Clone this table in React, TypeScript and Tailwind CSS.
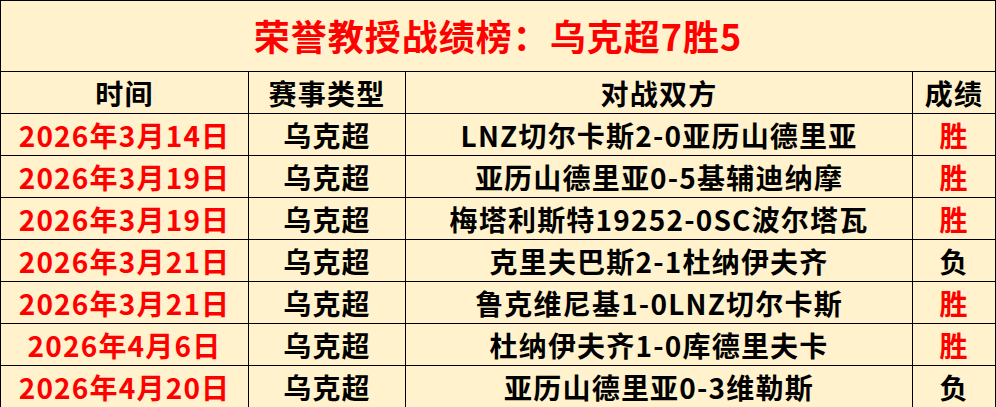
import { FC } from "react";

interface Match {
  date: string;
  league: string;
  teams: string;
  result: "胜" | "负";
}

const matches: Match[] = [
  { date: "2026年3月14日", league: "乌克超", teams: "LNZ切尔卡斯2-0亚历山德里亚", result: "胜" },
  { date: "2026年3月19日", league: "乌克超", teams: "亚历山德里亚0-5基辅迪纳摩", result: "胜" },
  { date: "2026年3月19日", league: "乌克超", teams: "梅塔利斯特19252-0SC波尔塔瓦", result: "胜" },
  { date: "2026年3月21日", league: "乌克超", teams: "克里夫巴斯2-1杜纳伊夫齐", result: "负" },
  { date: "2026年3月21日", league: "乌克超", teams: "鲁克维尼基1-0LNZ切尔卡斯", result: "胜" },
  { date: "2026年4月6日", league: "乌克超", teams: "杜纳伊夫齐1-0库德里夫卡", result: "胜" },
  { date: "2026年4月20日", league: "乌克超", teams: "亚历山德里亚0-3维勒斯", result: "负" },
];

const cell =
  "h-[42px] flex items-center justify-center border-r border-b border-black text-[28px] font-bold leading-none tracking-[1.2px] whitespace-nowrap";

const App: FC = () => {
  return (
    <div
      className="w-[996px] h-[407px] bg-[#fff2cc] border-l border-t border-black text-black"
      style={{ fontFamily: '"Noto Sans CJK SC", "Noto Sans", sans-serif' }}
    >
      {/* Title */}
      <div className="h-[71px] flex items-center justify-center pb-[3px] border-r border-b border-black text-[36px] font-bold text-[#ff0000] leading-none tracking-[1px]">
        荣誉教授战绩榜：乌克超7胜5
      </div>

      <div className="grid grid-cols-[248px_157px_507px_83px]">
        {/* Header */}
        <div className={cell}>时间</div>
        <div className={cell}>赛事类型</div>
        <div className={cell}>对战双方</div>
        <div className={cell}>成绩</div>

        {matches.map((m, i) => (
          <div key={i} className="contents">
            <div className={`${cell} text-[#ff0000]`}>{m.date}</div>
            <div className={cell}>{m.league}</div>
            <div className={cell}>{m.teams}</div>
            <div
              className={`${cell} ${
                m.result === "胜" ? "text-[#ff0000]" : "text-black"
              }`}
            >
              {m.result}
            </div>
          </div>
        ))}
      </div>
    </div>
  );
};

export default App;
